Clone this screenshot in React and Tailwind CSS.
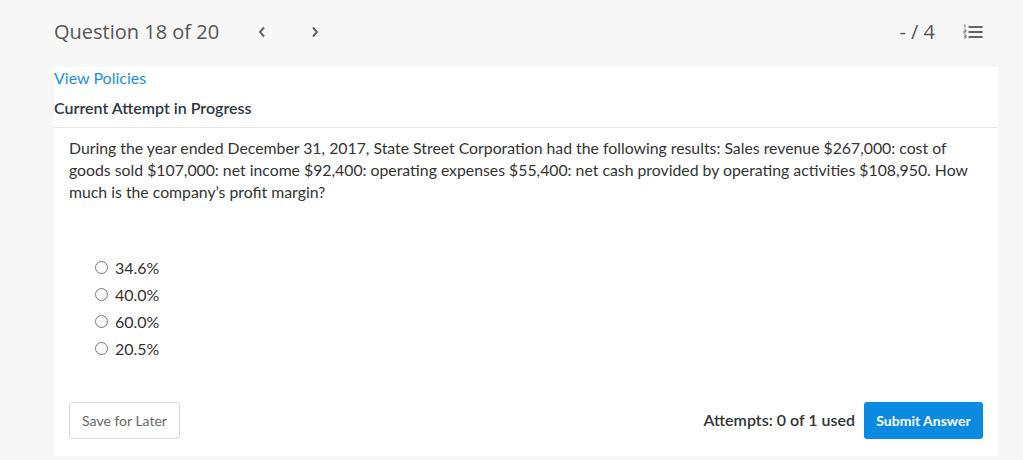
import React from "react";

const lato = { fontFamily: "Lato, 'Noto Sans', sans-serif" };

function Radio({ label }) {
  return (
    <label className="flex items-center h-[27px] gap-[7px] text-[16px] text-[#333]">
      <span className="w-[13px] h-[13px] rounded-full border border-[#777] bg-white shrink-0" />
      <span>{label}</span>
    </label>
  );
}

export default function App() {
  return (
    <div className="w-[1023px] h-[460px] bg-[#f7f7f7] overflow-hidden" style={lato}>
      <header className="h-[67px] flex items-center pl-[54px] pr-[40px] pb-[4px]">
        <span className="text-[20px] text-[#555]" style={{ fontFamily: "'Open Sans', sans-serif" }}>
          Question 18 of 20
        </span>
        <div className="flex items-center ml-[39px] gap-[45px]">
          <svg width="8" height="12" viewBox="0 0 8 12">
            <path d="M6 1.5 L2 6 L6 10.5" fill="none" stroke="#666" strokeWidth="2" />
          </svg>
          <svg width="8" height="12" viewBox="0 0 8 12">
            <path d="M2 1.5 L6 6 L2 10.5" fill="none" stroke="#666" strokeWidth="2" />
          </svg>
        </div>
        <div className="ml-auto flex items-center gap-[28px]">
          <span className="text-[20px] text-[#555]" style={{ fontFamily: "'Open Sans', sans-serif" }}>- / 4</span>
          <svg width="20" height="16" viewBox="0 0 20 16">
            <g fill="#666">
              <rect x="5.5" y="2" width="14" height="2" />
              <rect x="5.5" y="7" width="14" height="2" />
              <rect x="5.5" y="12" width="14" height="2" />
            </g>
            <g fill="none" stroke="#666" strokeWidth="0.8">
              <path d="M1 1.2 L2 0.8 L2 4.2" />
              <path d="M0.8 6 L3 6 L3 7.5 L0.8 7.5 L0.8 9 L3 9" />
              <path d="M0.8 11 L3 11 L3 14 L0.8 14 M1.2 12.5 L3 12.5" />
            </g>
          </svg>
        </div>
      </header>
      <main className="ml-[54px] w-[944px] h-[389px] bg-white flex flex-col">
        <div>
          <a className="block text-[16px] text-[#1b8ee3] leading-[22px]">View Policies</a>
          <div className="mt-[8px] text-[16px] text-[#2d3740] leading-[22px]" style={{ fontWeight: 600 }}>
            Current Attempt in Progress
          </div>
        </div>
        <div className="mt-[8px] border-t border-[#e8e8e8]" />
        <div className="px-[15px] pt-[9px] flex-1 flex flex-col">
          <p className="text-[15.8px] leading-[22px] text-[#333]">
            During the year ended December 31, 2017, State Street Corporation had the following results: Sales revenue $267,000: cost of goods sold $107,000: net income $92,400: operating expenses $55,400: net cash provided by operating activities $108,950. How much is the company’s profit margin?
          </p>
          <div className="mt-[51px] ml-[26px] flex flex-col">
            <Radio label="34.6%" />
            <Radio label="40.0%" />
            <Radio label="60.0%" />
            <Radio label="20.5%" />
          </div>
          <div className="mt-[40px] flex items-center">
            <button className="h-[37px] w-[111px] border border-[#d8d8d8] rounded-[3px] text-[14px] text-[#666] bg-white">
              Save for Later
            </button>
            <div className="ml-auto flex items-center gap-[9px]">
              <span className="text-[16px] text-[#333] pb-[2px]" style={{ fontWeight: 600 }}>Attempts: 0 of 1 used</span>
              <button className="h-[37px] w-[119px] rounded-[3px] bg-[#0a8ae0] text-white text-[14px] font-bold">
                Submit Answer
              </button>
            </div>
          </div>
        </div>
      </main>
    </div>
  );
}
